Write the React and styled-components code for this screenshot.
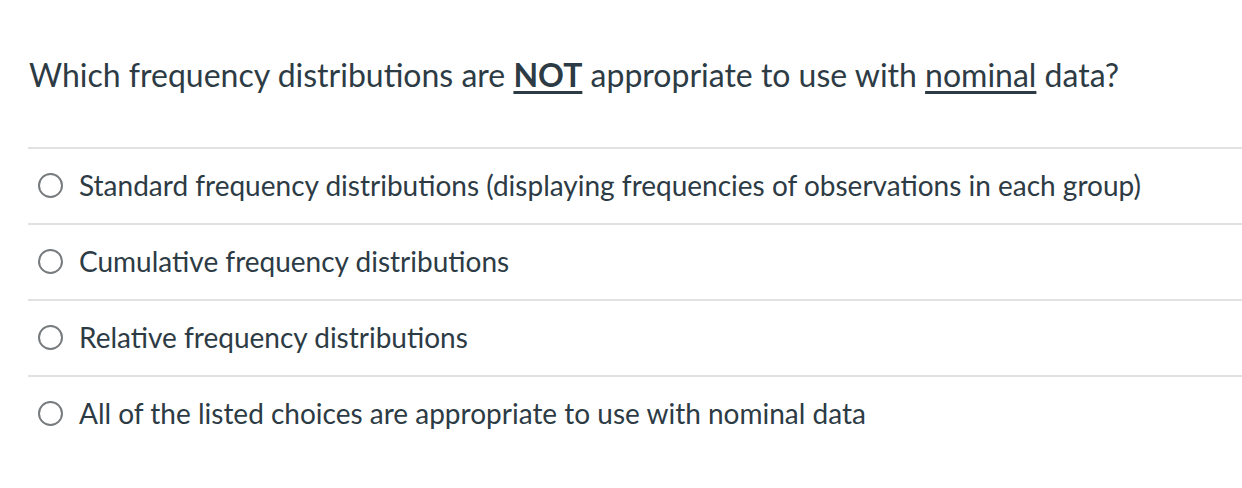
import React from 'react'
import styled, { createGlobalStyle } from 'styled-components'

const GlobalStyle = createGlobalStyle`
  body {
    margin: 0;
    background: #ffffff;
    font-family: Lato, 'Liberation Sans', sans-serif;
    color: #2d3b45;
  }
`

const Page = styled.div`
  padding: 55px 0 0 28px;
  width: 1214px;
  height: 433px;
`

const Question = styled.p`
  margin: 0;
  padding-left: 1px;
  font-size: 32px;
  line-height: 40px;
  height: 92px;
  border-bottom: 2px solid #e1e2e3;
`

const Strong = styled.strong`
  font-weight: 700;
  text-decoration: underline;
  text-underline-offset: 4px;
`

const Under = styled.span`
  text-decoration: underline;
  text-underline-offset: 4px;
`

const Options = styled.div`
  display: flex;
  flex-direction: column;
`

const Option = styled.label`
  display: flex;
  align-items: center;
  gap: 16px;
  height: 72px;
  padding: 0 0 2px 10px;
  font-size: 28px;
  border-bottom: ${({ $last }) => ($last ? 'none' : '2px solid #e1e2e3')};
`

const Radio = styled.span`
  width: 21px;
  height: 21px;
  margin-top: 1px;
  border: 2px solid #777b7e;
  border-radius: 50%;
  flex-shrink: 0;
`

const choices = [
  'Standard frequency distributions (displaying frequencies of observations in each group)',
  'Cumulative frequency distributions',
  'Relative frequency distributions',
  'All of the listed choices are appropriate to use with nominal data'
]

const App = () => (
  <>
    <GlobalStyle />
    <Page>
      <Question>
        Which frequency distributions are <Strong>NOT</Strong> appropriate to use with{' '}
        <Under>nominal</Under> data?
      </Question>
      <Options>
        {choices.map((c, i) => (
          <Option key={i} $last={i === choices.length - 1}>
            <Radio />
            {c}
          </Option>
        ))}
      </Options>
    </Page>
  </>
)

export default App
